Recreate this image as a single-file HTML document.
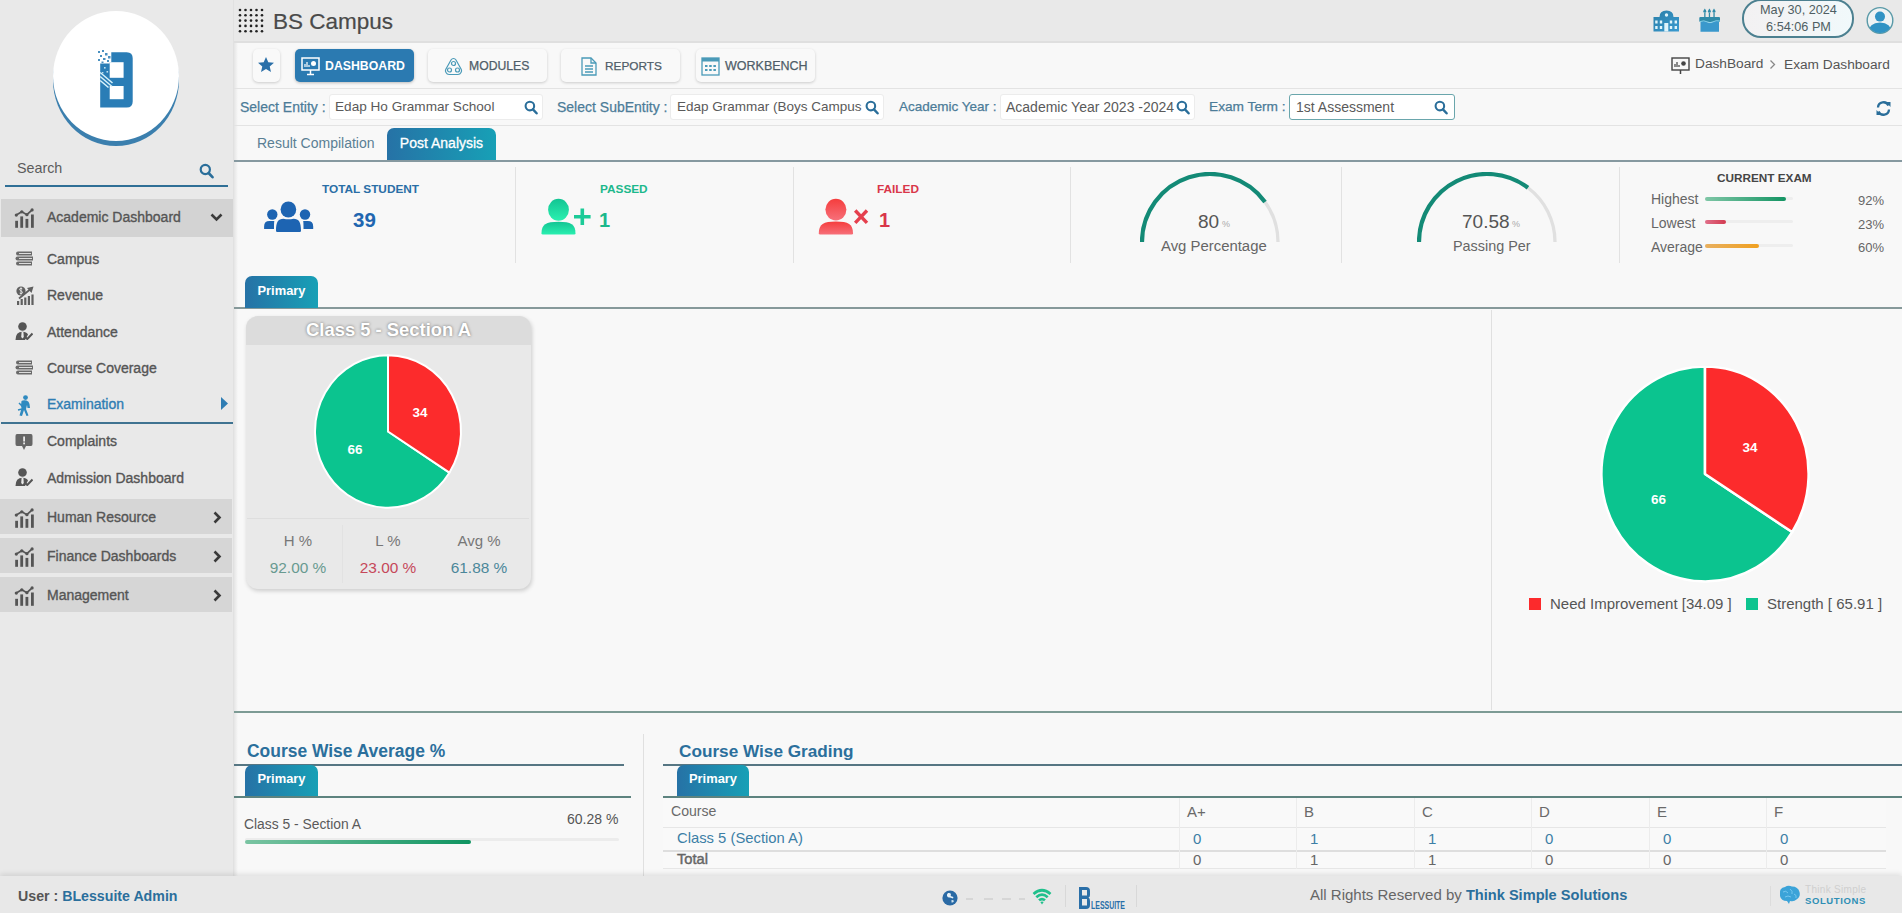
<!DOCTYPE html>
<html><head><meta charset="utf-8">
<style>
*{box-sizing:border-box;margin:0;padding:0}
html,body{width:1902px;height:913px;overflow:hidden}
body{font-family:"Liberation Sans",sans-serif;background:#f8f8f8;position:relative;color:#555}
.a{position:absolute}
.t{position:absolute;white-space:nowrap;line-height:1}
#side{left:0;top:0;width:234px;height:880px;background:#e9e9e9}
#hdr{left:234px;top:0;width:1668px;height:43px;background:#e9e9e9;border-bottom:2px solid #dfdfdf}
.navb{position:absolute;top:49px;height:33px;border-radius:5px;background:#f9f9f9;box-shadow:0 1px 3px rgba(0,0,0,.18)}
.navt{position:absolute;top:59px;font-size:12.2px;color:#4f5d68;white-space:nowrap;line-height:14px;-webkit-text-stroke:0.25px currentColor}
.hl{position:absolute;height:1px;background:#e2e2e2}
.lbl{position:absolute;top:100px;font-size:14px;color:#4c7c98;white-space:nowrap;line-height:14px;-webkit-text-stroke:0.25px currentColor}
.box{position:absolute;top:94px;height:26px;background:#fff;border:1px solid #ececec;border-radius:3px}
.boxt{position:absolute;top:99.5px;font-size:14px;color:#5a5a5a;white-space:nowrap;line-height:14px}
.vdiv{position:absolute;top:167px;width:1px;height:96px;background:#e2e2e2}
.ptab{position:absolute;height:32px;border-radius:7px 7px 0 0;background:linear-gradient(90deg,#2672a6,#17a0b6)}
.ptab span{position:absolute;left:0;right:0;top:7.5px;text-align:center;color:#fff;font-size:12.9px;font-weight:bold;line-height:14px}
.sitem{position:absolute;left:47px;font-size:14px;color:#555;white-space:nowrap;line-height:14px;-webkit-text-stroke:0.35px currentColor}
.srow{position:absolute;left:0;width:232px;height:35px;background:#d6d6d6}
</style></head><body>

<!-- SIDEBAR -->
<div id="side" class="a"></div>
<!-- logo circle -->
<div class="a" style="left:53px;top:14px;width:126px;height:132px;border-radius:50%;background:#3b7fae;"></div>
<div class="a" style="left:53px;top:11px;width:126px;height:130px;border-radius:50%;background:#fff;"></div>
<svg class="a" style="left:95px;top:46px" width="40" height="64" viewBox="0 0 40 64">
  <path d="M5.2 17.4 H14.7 V16.2 H16.3 V6.3 H31.7 Q37.7 6.3 37.7 12.3 V55.4 Q37.7 61.4 31.7 61.4 H5.2 Z" fill="#2a7db6"/>
  <rect x="14.7" y="16.2" width="13.9" height="15.6" fill="#fff"/>
  <rect x="14.7" y="40" width="13.9" height="13.2" fill="#fff"/>
  <g fill="#2a7db6" opacity=".85"><rect x="3" y="5" width="2" height="2"/><rect x="7" y="4" width="2" height="2"/><rect x="10" y="7" width="2.5" height="2.5"/><rect x="5" y="9" width="2" height="2"/><rect x="13" y="10" width="2.5" height="2.5"/><rect x="8" y="12" width="2.5" height="2"/><rect x="3" y="13" width="2" height="2"/><rect x="12" y="14" width="2" height="2"/><rect x="6.5" y="15.5" width="2" height="1.5"/></g>
  <g fill="#bfe0f0"><rect x="9" y="21" width="1.6" height="1.6"/><rect x="11.5" y="25" width="1.6" height="1.6"/><rect x="7" y="26" width="1.4" height="1.4"/></g>
  <g stroke="#d8f2fb" stroke-width="1.5"><line x1="5.2" y1="26.5" x2="17.5" y2="37"/><line x1="5.2" y1="30.5" x2="17" y2="40.5"/><line x1="5.2" y1="34.5" x2="13.5" y2="41.5"/></g>
</svg>
<!-- search -->
<div class="t" style="left:17px;top:161px;font-size:14.3px;color:#5c5c5c">Search</div>
<svg class="a" style="left:199px;top:163px" width="15" height="16" viewBox="0 0 15 16"><circle cx="6.3" cy="6.5" r="4.6" fill="none" stroke="#2a6e9a" stroke-width="2.2"/><line x1="9.6" y1="10" x2="13.5" y2="14.2" stroke="#2a6e9a" stroke-width="2.6" stroke-linecap="round"/></svg>
<div class="a" style="left:5px;top:185px;width:223px;height:2px;background:#2f6f96"></div>

<!-- Academic Dashboard -->
<div class="srow" style="top:199px;height:38px;left:1px;background:#d3d3d3"></div>
<svg class="a" style="left:14px;top:208px" width="21" height="21" viewBox="0 0 21 21"><g fill="#555"><rect x="1.2" y="12.8" width="2.8" height="7"/><rect x="6.3" y="8.4" width="2.8" height="11.4"/><rect x="11.5" y="10.9" width="2.8" height="8.9"/><rect x="17" y="6.5" width="2.8" height="13.3"/><circle cx="2.3" cy="7.1" r="1.6"/><circle cx="7.8" cy="3.8" r="1.6"/><circle cx="12.9" cy="6.7" r="1.6"/><circle cx="18.1" cy="1.9" r="1.6"/></g><polyline points="2.3,7.1 7.8,3.8 12.9,6.7 18.1,1.9" fill="none" stroke="#555" stroke-width="1.7"/></svg>
<div class="sitem" style="top:210px;color:#555">Academic Dashboard</div>
<svg class="a" style="left:210px;top:213px" width="13" height="9" viewBox="0 0 13 9"><polyline points="1.5,1.5 6.5,6.5 11.5,1.5" fill="none" stroke="#3a3a3a" stroke-width="2.6"/></svg>

<!-- sub items -->
<svg class="a" style="left:15px;top:251px" width="19" height="15" viewBox="0 0 19 15"><g fill="#6a6a6a"><path d="M3 0.5 H17 V4.5 H3 Q1 4.5 1 2.5 Q1 0.5 3 0.5Z"/><path d="M2.5 5.5 H18 V9.5 H2.5 Q0.5 9.5 0.5 7.5 Q0.5 5.5 2.5 5.5Z"/><path d="M3 10.5 H17 V14.5 H3 Q1 14.5 1 12.5 Q1 10.5 3 10.5Z"/></g><g stroke="#e9e9e9" stroke-width="0.9"><line x1="4" y1="2.5" x2="16" y2="2.5"/><line x1="4" y1="7.5" x2="17" y2="7.5"/><line x1="4" y1="12.5" x2="16" y2="12.5"/></g></svg>
<div class="sitem" style="top:252px">Campus</div>
<svg class="a" style="left:16px;top:286px" width="18" height="19" viewBox="0 0 18 19"><circle cx="5" cy="5" r="4.6" fill="#5f5f5f"/><path d="M6.3 2.8 Q5 2 3.8 2.8 Q3.2 3.8 4.4 4.6 L5.8 5.3 Q6.9 6 6.2 7.2 Q5 8 3.7 7.2 M5 1.3 V8.7" fill="none" stroke="#e9e9e9" stroke-width="0.9"/><g fill="#5f5f5f"><rect x="1" y="15" width="2.2" height="4"/><rect x="4.6" y="13" width="2.2" height="6"/><rect x="8.2" y="11.5" width="2.2" height="7.5"/><rect x="11.8" y="10" width="2.2" height="9"/><rect x="15.4" y="8.5" width="2.2" height="10.5"/></g><path d="M3 12.5 L14 3.5" stroke="#5f5f5f" stroke-width="1.8"/><polygon points="11,2 17.5,0.5 15.5,7" fill="#5f5f5f"/></svg>
<div class="sitem" style="top:288px">Revenue</div>
<svg class="a" style="left:15px;top:322px" width="18" height="18" viewBox="0 0 18 18"><circle cx="7.5" cy="4.5" r="4.3" fill="#555"/><path d="M0.5 18 Q0.5 9.8 7.5 9.8 Q11.5 9.8 13 12.5 L10 18 Z" fill="#555"/><path d="M6.6 10 L8.4 10 L8.8 15 L7.5 16.5 L6.2 15 Z" fill="#e9e9e9"/><polyline points="9.5,14.5 12.3,17 17.5,11.5" fill="none" stroke="#555" stroke-width="2"/></svg>
<div class="sitem" style="top:325px">Attendance</div>
<svg class="a" style="left:15px;top:360px" width="19" height="15" viewBox="0 0 19 15"><g fill="#6a6a6a"><path d="M3 0.5 H17 V4.5 H3 Q1 4.5 1 2.5 Q1 0.5 3 0.5Z"/><path d="M2.5 5.5 H18 V9.5 H2.5 Q0.5 9.5 0.5 7.5 Q0.5 5.5 2.5 5.5Z"/><path d="M3 10.5 H17 V14.5 H3 Q1 14.5 1 12.5 Q1 10.5 3 10.5Z"/></g><g stroke="#e9e9e9" stroke-width="0.9"><line x1="4" y1="2.5" x2="16" y2="2.5"/><line x1="4" y1="7.5" x2="17" y2="7.5"/><line x1="4" y1="12.5" x2="16" y2="12.5"/></g></svg>
<div class="sitem" style="top:361px">Course Coverage</div>
<svg class="a" style="left:17px;top:395px" width="15" height="21" viewBox="0 0 15 21"><circle cx="8.5" cy="2.6" r="2.4" fill="#2f8ac0"/><path d="M4.5 6 Q6 5 9.5 5.5 Q12 6 12.5 9 L13 13 L10.5 13 L10 10 L9 14 L11.5 20.5 L9.5 21 L7 15 L5 21 L2.5 20.5 L4.5 13.5 Q3.5 11 4.5 6Z" fill="#2f8ac0"/><path d="M2 8 L6 12 M1 15 L5 14" stroke="#2f8ac0" stroke-width="1.5"/></svg>
<div class="sitem" style="top:397px;color:#2f7db3">Examination</div>
<svg class="a" style="left:221px;top:397px" width="8" height="13" viewBox="0 0 8 13"><polygon points="0,0 7,6.5 0,13" fill="#2f7db3"/></svg>
<div class="a" style="left:1px;top:422px;width:232px;height:2px;background:#3f7391"></div>
<svg class="a" style="left:15px;top:433px" width="18" height="18" viewBox="0 0 18 18"><path d="M2 1 H16 Q17.5 1 17.5 3 V11 Q17.5 13 16 13 H11 L9 17 L7 13 H2 Q0.5 13 0.5 11 V3 Q0.5 1 2 1 Z" fill="#666"/><rect x="8.2" y="3.5" width="1.8" height="5" fill="#e9e9e9"/><rect x="8.2" y="9.5" width="1.8" height="1.8" fill="#e9e9e9"/></svg>
<div class="sitem" style="top:434px">Complaints</div>
<svg class="a" style="left:15px;top:468px" width="18" height="18" viewBox="0 0 18 18"><circle cx="7.5" cy="4.5" r="4.3" fill="#555"/><path d="M0.5 18 Q0.5 9.8 7.5 9.8 Q11.5 9.8 13 12.5 L10 18 Z" fill="#555"/><path d="M6.6 10 L8.4 10 L8.8 15 L7.5 16.5 L6.2 15 Z" fill="#e9e9e9"/><polyline points="9.5,14.5 12.3,17 17.5,11.5" fill="none" stroke="#555" stroke-width="2"/></svg>
<div class="sitem" style="top:471px">Admission Dashboard</div>

<div class="srow" style="top:499px"></div>
<svg class="a" style="left:14px;top:508px" width="21" height="21" viewBox="0 0 21 21"><g fill="#555"><rect x="1.2" y="12.8" width="2.8" height="7"/><rect x="6.3" y="8.4" width="2.8" height="11.4"/><rect x="11.5" y="10.9" width="2.8" height="8.9"/><rect x="17" y="6.5" width="2.8" height="13.3"/><circle cx="2.3" cy="7.1" r="1.6"/><circle cx="7.8" cy="3.8" r="1.6"/><circle cx="12.9" cy="6.7" r="1.6"/><circle cx="18.1" cy="1.9" r="1.6"/></g><polyline points="2.3,7.1 7.8,3.8 12.9,6.7 18.1,1.9" fill="none" stroke="#555" stroke-width="1.7"/></svg>
<div class="sitem" style="top:510px">Human Resource</div>
<svg class="a" style="left:213px;top:511px" width="9" height="13" viewBox="0 0 9 13"><polyline points="1.5,1.5 6.5,6.5 1.5,11.5" fill="none" stroke="#3a3a3a" stroke-width="2.6"/></svg>

<div class="srow" style="top:538px"></div>
<svg class="a" style="left:14px;top:547px" width="21" height="21" viewBox="0 0 21 21"><g fill="#555"><rect x="1.2" y="12.8" width="2.8" height="7"/><rect x="6.3" y="8.4" width="2.8" height="11.4"/><rect x="11.5" y="10.9" width="2.8" height="8.9"/><rect x="17" y="6.5" width="2.8" height="13.3"/><circle cx="2.3" cy="7.1" r="1.6"/><circle cx="7.8" cy="3.8" r="1.6"/><circle cx="12.9" cy="6.7" r="1.6"/><circle cx="18.1" cy="1.9" r="1.6"/></g><polyline points="2.3,7.1 7.8,3.8 12.9,6.7 18.1,1.9" fill="none" stroke="#555" stroke-width="1.7"/></svg>
<div class="sitem" style="top:549px">Finance Dashboards</div>
<svg class="a" style="left:213px;top:550px" width="9" height="13" viewBox="0 0 9 13"><polyline points="1.5,1.5 6.5,6.5 1.5,11.5" fill="none" stroke="#3a3a3a" stroke-width="2.6"/></svg>

<div class="srow" style="top:577px"></div>
<svg class="a" style="left:14px;top:586px" width="21" height="21" viewBox="0 0 21 21"><g fill="#555"><rect x="1.2" y="12.8" width="2.8" height="7"/><rect x="6.3" y="8.4" width="2.8" height="11.4"/><rect x="11.5" y="10.9" width="2.8" height="8.9"/><rect x="17" y="6.5" width="2.8" height="13.3"/><circle cx="2.3" cy="7.1" r="1.6"/><circle cx="7.8" cy="3.8" r="1.6"/><circle cx="12.9" cy="6.7" r="1.6"/><circle cx="18.1" cy="1.9" r="1.6"/></g><polyline points="2.3,7.1 7.8,3.8 12.9,6.7 18.1,1.9" fill="none" stroke="#555" stroke-width="1.7"/></svg>
<div class="sitem" style="top:588px">Management</div>
<svg class="a" style="left:213px;top:589px" width="9" height="13" viewBox="0 0 9 13"><polyline points="1.5,1.5 6.5,6.5 1.5,11.5" fill="none" stroke="#3a3a3a" stroke-width="2.6"/></svg>

<div class="a" style="left:233px;top:0;width:5px;height:876px;background:linear-gradient(90deg,#e0e0e0,rgba(248,248,248,0))"></div>
<!-- HEADER -->
<div id="hdr" class="a"></div>
<svg class="a" style="left:238px;top:8px" width="26" height="25" viewBox="0 0 26 25"><g fill="#222">
<circle cx="2" cy="2" r="1.3"/><circle cx="7.5" cy="2" r="1.3"/><circle cx="13" cy="2" r="1.3"/><circle cx="18.5" cy="2" r="1.3"/><circle cx="24" cy="2" r="1.3"/>
<circle cx="2" cy="7.3" r="1.3"/><circle cx="7.5" cy="7.3" r="1.3"/><circle cx="13" cy="7.3" r="1.3"/><circle cx="18.5" cy="7.3" r="1.3"/><circle cx="24" cy="7.3" r="1.3"/>
<circle cx="2" cy="12.6" r="1.3"/><circle cx="7.5" cy="12.6" r="1.3"/><circle cx="13" cy="12.6" r="1.3"/><circle cx="18.5" cy="12.6" r="1.3"/><circle cx="24" cy="12.6" r="1.3"/>
<circle cx="2" cy="17.9" r="1.3"/><circle cx="7.5" cy="17.9" r="1.3"/><circle cx="13" cy="17.9" r="1.3"/><circle cx="18.5" cy="17.9" r="1.3"/><circle cx="24" cy="17.9" r="1.3"/>
<circle cx="2" cy="23.2" r="1.3"/><circle cx="7.5" cy="23.2" r="1.3"/><circle cx="13" cy="23.2" r="1.3"/><circle cx="18.5" cy="23.2" r="1.3"/><circle cx="24" cy="23.2" r="1.3"/>
</g></svg>
<div class="t" style="left:273px;top:11px;font-size:22.5px;color:#4a4a4a;-webkit-text-stroke:0.2px currentColor">BS Campus</div>
<!-- header right icons -->
<svg class="a" style="left:1653px;top:10px" width="27" height="22" viewBox="0 0 27 22"><defs><linearGradient id="sg" x1="0" y1="0" x2="1" y2="1"><stop offset="0" stop-color="#2a7fa8"/><stop offset="1" stop-color="#3a9ad0"/></linearGradient></defs><path d="M0.5 7 H6.5 Q6.5 0.5 13.5 0.5 Q20.5 0.5 20.5 7 H26 V21.5 H0.5 Z" fill="url(#sg)"/><g fill="#dff4fb"><circle cx="13.5" cy="5" r="1.7"/><rect x="2.2" y="10.5" width="2.4" height="3"/><rect x="6.8" y="10.5" width="2.4" height="3"/><rect x="16.8" y="10.5" width="2.4" height="3"/><rect x="21.6" y="10.5" width="2.4" height="3"/><rect x="2.2" y="16" width="2.4" height="3"/><rect x="6.8" y="16" width="2.4" height="3"/><rect x="16.8" y="16" width="2.4" height="3"/><rect x="21.6" y="16" width="2.4" height="3"/><rect x="11.3" y="13" width="4" height="8.5"/></g></svg>
<svg class="a" style="left:1699px;top:8px" width="22" height="24" viewBox="0 0 22 24"><g fill="#2f8aa8"><path d="M5.8 0.5 Q7.3 2.5 7.3 3.5 Q7.3 4.8 5.8 4.8 Q4.3 4.8 4.3 3.5 Q4.3 2.5 5.8 0.5Z"/><path d="M10.4 0.5 Q11.9 2.5 11.9 3.5 Q11.9 4.8 10.4 4.8 Q8.9 4.8 8.9 3.5 Q8.9 2.5 10.4 0.5Z"/><path d="M15 0.5 Q16.5 2.5 16.5 3.5 Q16.5 4.8 15 4.8 Q13.5 4.8 13.5 3.5 Q13.5 2.5 15 0.5Z"/><rect x="5.2" y="5" width="1.3" height="4.5"/><rect x="9.8" y="5" width="1.3" height="4.5"/><rect x="14.4" y="5" width="1.3" height="4.5"/><rect x="0.3" y="9" width="20.7" height="5" rx="1"/></g><path d="M1.5 13.8 Q5 12.5 8 14 T14 14 T20 13.5 V23.7 H1.5 Z" fill="#3a98cc"/><path d="M1 13.6 Q5 12 8 13.8 T14 13.8 T21 13" fill="none" stroke="#8fd6ee" stroke-width="0.9"/></svg>
<div class="a" style="left:1742px;top:-1px;width:112px;height:38.5px;border:2px solid #4c8090;border-radius:19px;background:linear-gradient(90deg,#f3f1f2,#f1f9fb)"></div>
<div class="t" style="left:1743px;width:111px;top:1.5px;text-align:center;font-size:12.7px;color:#4f5f63;line-height:17.5px">May 30, 2024<br>6:54:06 PM</div>
<svg class="a" style="left:1866px;top:6px" width="28" height="29" viewBox="0 0 28 29"><defs><clipPath id="uc"><circle cx="14" cy="14.4" r="12.6"/></clipPath></defs><circle cx="14" cy="14.4" r="12.8" fill="#eef3f4" stroke="#5a9aa8" stroke-width="1.4"/><g clip-path="url(#uc)" fill="#3193c4"><circle cx="14" cy="10.6" r="5"/><path d="M2 29 Q2 16.5 14 16.5 Q26 16.5 26 29 Z"/></g></svg>

<!-- NAV ROW -->
<div class="a" style="left:234px;top:88px;width:1668px;height:1px;background:#e3e3e3"></div>
<div class="navb" style="left:253px;width:27px;"></div>
<svg class="a" style="left:257px;top:56px" width="18" height="17" viewBox="0 0 18 17"><polygon points="9,1 11.3,6.2 17,6.7 12.7,10.4 14,16 9,13 4,16 5.3,10.4 1,6.7 6.7,6.2" fill="#2a6fa8"/></svg>
<div class="navb" style="left:295px;width:119px;background:#2b7ab1;box-shadow:0 1px 3px rgba(0,0,0,.25)"></div>
<svg class="a" style="left:301px;top:57px" width="19" height="19" viewBox="0 0 19 19"><rect x="1" y="1" width="17" height="12" fill="none" stroke="#fff" stroke-width="1.5"/><line x1="9.5" y1="13" x2="9.5" y2="17" stroke="#fff" stroke-width="1.5"/><line x1="6" y1="17.5" x2="13" y2="17.5" stroke="#fff" stroke-width="1.5"/><circle cx="12.5" cy="6.5" r="2.5" fill="#fff"/><path d="M4 10 V7 M6 10 V5 M8 10 V8" stroke="#fff" stroke-width="1.2"/></svg>
<div class="navt" style="left:325px;color:#fff;font-weight:bold;font-size:12.3px;-webkit-text-stroke:0">DASHBOARD</div>
<div class="navb" style="left:428px;width:119px;"></div>
<svg class="a" style="left:444px;top:57px" width="19" height="19" viewBox="0 0 19 19"><g fill="none" stroke="#4a9ab8" stroke-width="1.2"><path d="M9.5 1.5 Q11 1.5 12 3 L17.3 12.5 Q18 14 17 15.5 Q16 17.5 14 17.5 H5 Q3 17.5 2 15.5 Q1 14 1.7 12.5 L7 3 Q8 1.5 9.5 1.5 Z"/><circle cx="9.5" cy="6.5" r="2"/><circle cx="5.5" cy="13" r="2"/><circle cx="13.5" cy="13" r="2"/></g></svg>
<div class="navt" style="left:469px">MODULES</div>
<div class="navb" style="left:561px;width:119px;"></div>
<svg class="a" style="left:581px;top:57px" width="16" height="19" viewBox="0 0 16 19"><g fill="none" stroke="#4a9ab8" stroke-width="1.3"><path d="M1 1 H10 L15 6 V18 H1 Z"/><path d="M10 1 V6 H15"/><path d="M4 9 H12 M4 12 H12 M4 15 H12"/></g></svg>
<div class="navt" style="left:605px;font-size:11.8px">REPORTS</div>
<div class="navb" style="left:696px;width:119px;"></div>
<svg class="a" style="left:701px;top:57px" width="19" height="19" viewBox="0 0 19 19"><g fill="none" stroke="#4a9ab8" stroke-width="1.3"><rect x="1" y="1" width="17" height="17"/></g><rect x="1" y="1" width="17" height="3.5" fill="#4a9ab8"/><g fill="#4a9ab8"><rect x="4" y="8" width="2.5" height="2"/><rect x="8.2" y="8" width="2.5" height="2"/><rect x="12.4" y="8" width="2.5" height="2"/><rect x="4" y="12" width="2.5" height="2"/><rect x="8.2" y="12" width="2.5" height="2"/><rect x="12.4" y="12" width="2.5" height="2"/></g></svg>
<div class="navt" style="left:725px;font-size:12.5px">WORKBENCH</div>
<!-- breadcrumb -->
<svg class="a" style="left:1671px;top:57px" width="19" height="18" viewBox="0 0 19 18"><rect x="1" y="1" width="17" height="12" fill="none" stroke="#444" stroke-width="1.4"/><line x1="9.5" y1="13" x2="9.5" y2="17" stroke="#444" stroke-width="1.5"/><circle cx="12.5" cy="6.5" r="2.3" fill="#444"/><path d="M4 10 V7 M6 10 V5 M8 10 V8" stroke="#444" stroke-width="1.2"/></svg>
<div class="t" style="left:1695px;top:57px;font-size:13.7px;color:#555">DashBoard</div>
<svg class="a" style="left:1769px;top:59px" width="7" height="11" viewBox="0 0 7 11"><polyline points="1.5,1.5 5.5,5.5 1.5,9.5" fill="none" stroke="#888" stroke-width="1.3"/></svg>
<div class="t" style="left:1784px;top:58px;font-size:13.7px;color:#555">Exam Dashboard</div>

<!-- FILTER ROW -->
<div class="a" style="left:234px;top:125px;width:1668px;height:1px;background:#e3e3e3"></div>
<div class="lbl" style="left:240px">Select Entity :</div>
<div class="box" style="left:329px;width:214px"></div>
<div class="boxt" style="left:335px;font-size:13.6px">Edap Ho Grammar School</div>
<svg class="a search" style="left:524px;top:100px" width="14" height="15" viewBox="0 0 15 16"><circle cx="6.3" cy="6.5" r="4.6" fill="none" stroke="#2a6e9a" stroke-width="2.2"/><line x1="9.6" y1="10" x2="13.5" y2="14.2" stroke="#2a6e9a" stroke-width="2.6" stroke-linecap="round"/></svg>
<div class="lbl" style="left:557px">Select SubEntity :</div>
<div class="box" style="left:670px;width:214px"></div>
<div class="boxt" style="left:677px;font-size:13.5px">Edap Grammar (Boys Campus</div>
<svg class="a" style="left:865px;top:100px" width="14" height="15" viewBox="0 0 15 16"><circle cx="6.3" cy="6.5" r="4.6" fill="none" stroke="#2a6e9a" stroke-width="2.2"/><line x1="9.6" y1="10" x2="13.5" y2="14.2" stroke="#2a6e9a" stroke-width="2.6" stroke-linecap="round"/></svg>
<div class="lbl" style="left:899px;font-size:13.5px">Academic Year :</div>
<div class="box" style="left:1000px;width:195px"></div>
<div class="boxt" style="left:1006px">Academic Year 2023 -2024</div>
<svg class="a" style="left:1176px;top:100px" width="14" height="15" viewBox="0 0 15 16"><circle cx="6.3" cy="6.5" r="4.6" fill="none" stroke="#2a6e9a" stroke-width="2.2"/><line x1="9.6" y1="10" x2="13.5" y2="14.2" stroke="#2a6e9a" stroke-width="2.6" stroke-linecap="round"/></svg>
<div class="lbl" style="left:1209px;font-size:13.7px">Exam Term :</div>
<div class="box" style="left:1289px;width:166px;border:1px solid #6aa6ac"></div>
<div class="boxt" style="left:1296px">1st Assessment</div>
<svg class="a" style="left:1434px;top:100px" width="14" height="15" viewBox="0 0 15 16"><circle cx="6.3" cy="6.5" r="4.6" fill="none" stroke="#2a6e9a" stroke-width="2.2"/><line x1="9.6" y1="10" x2="13.5" y2="14.2" stroke="#2a6e9a" stroke-width="2.6" stroke-linecap="round"/></svg>
<svg class="a" style="left:1876px;top:101px" width="15" height="15" viewBox="0 0 15 15"><g fill="none" stroke="#2a6e9a" stroke-width="2.3"><path d="M2 6.5 A5.5 5.5 0 0 1 12.5 4.5"/><path d="M13 8.5 A5.5 5.5 0 0 1 2.5 10.5"/></g><polygon points="10,1 14.5,1 14.5,6 " fill="#2a6e9a"/><polygon points="0.5,9 5,14 0.5,14" fill="#2a6e9a"/></svg>

<!-- TABS -->
<div class="a" style="left:234px;top:160px;width:1668px;height:2px;background:#8699a0"></div>
<div class="t" style="left:257px;top:136px;font-size:14px;color:#5a7f94">Result Compilation</div>
<div class="ptab" style="left:387px;top:128px;width:109px;height:32px;"><span style="top:8px;font-weight:normal;font-size:14px;-webkit-text-stroke:0.3px #fff">Post Analysis</span></div>


<!-- STATS -->
<div class="vdiv" style="left:515px"></div>
<div class="vdiv" style="left:793px"></div>
<div class="vdiv" style="left:1070px"></div>
<div class="vdiv" style="left:1341px"></div>
<div class="vdiv" style="left:1619px"></div>
<svg class="a" style="left:263px;top:200px" width="52" height="34" viewBox="0 0 52 34"><g fill="#1d64b2"><ellipse cx="25.4" cy="9.5" rx="7.8" ry="8.1"/><path d="M13 30.8 C13 22 15 18.7 20.5 18.7 Q25.4 19.8 30.5 18.7 C36 18.7 38 22 38 30.8 Q38 32 36.8 32 H14.2 Q13 32 13 30.8Z"/><circle cx="9.3" cy="14.5" r="5.2"/><path d="M1.1 29 V26.5 Q1.1 21.1 6.5 21.1 H11.3 Q11 23 11 26 V29 Z"/><circle cx="42" cy="14.5" r="5.2"/><path d="M50.2 29 V26.5 Q50.2 21.1 44.8 21.1 H40.2 Q40.5 23 40.5 26 V29 Z"/></g></svg>
<div class="t" style="left:322px;top:184px;font-size:11.8px;font-weight:bold;color:#2a6ea6">TOTAL STUDENT</div>
<div class="t" style="left:353px;top:210px;font-size:20.5px;font-weight:bold;color:#2166b0">39</div>

<svg class="a" style="left:540px;top:198px" width="52" height="38" viewBox="0 0 52 38"><defs><linearGradient id="gp" x1="0" y1="0" x2="0" y2="1"><stop offset="0" stop-color="#12c493"/><stop offset="1" stop-color="#2af0b0"/></linearGradient></defs><g fill="url(#gp)"><ellipse cx="18.5" cy="11.7" rx="10.4" ry="11"/><path d="M1.5 35.3 C1.5 26.5 6 23.8 18.5 23.8 C31 23.8 35.5 26.5 35.5 35.3 Q35.5 36.6 34.2 36.6 H2.8 Q1.5 36.6 1.5 35.3 Z"/></g><path d="M42.3 10.5 V27.1 M34 18.8 H50.6" stroke="#1ccb98" stroke-width="3.6"/></svg>
<div class="t" style="left:600px;top:184px;font-size:11.8px;font-weight:bold;color:#1cb88c">PASSED</div>
<div class="t" style="left:599px;top:210px;font-size:20px;font-weight:bold;color:#1cb88c">1</div>

<svg class="a" style="left:818px;top:198px" width="52" height="38" viewBox="0 0 52 38"><defs><linearGradient id="gf" x1="0" y1="0" x2="0" y2="1"><stop offset="0" stop-color="#f53d3d"/><stop offset="1" stop-color="#f7707a"/></linearGradient></defs><g fill="url(#gf)"><ellipse cx="17.9" cy="11.6" rx="10.5" ry="10.8"/><path d="M0.8 35.3 C0.8 26.3 5.5 23.5 17.9 23.5 C30.3 23.5 35 26.3 35 35.3 Q35 36.6 33.7 36.6 H2.1 Q0.8 36.6 0.8 35.3 Z"/></g><path d="M37.2 12.5 L49 24.9 M49 12.5 L37.2 24.9" stroke="#e5404e" stroke-width="3.4"/></svg>
<div class="t" style="left:877px;top:184px;font-size:11.8px;font-weight:bold;color:#d9364a">FAILED</div>
<div class="t" style="left:879px;top:210px;font-size:20px;font-weight:bold;color:#d9364a">1</div>

<svg class="a" style="left:1140px;top:172px" width="140" height="76" viewBox="0 0 140 76"><path d="M125.01 30.03 A68 68 0 0 1 138 70" fill="none" stroke="#e0e0e0" stroke-width="3.3"/><path d="M2 70 A68 68 0 0 1 125.01 30.03" fill="none" stroke="#138a76" stroke-width="4.2"/></svg>
<div class="t" style="left:1198px;top:212px;font-size:19px;color:#555">80</div>
<div class="t" style="left:1222px;top:220px;font-size:9px;color:#aaa">%</div>
<div class="t" style="left:1161px;top:239px;font-size:14.9px;color:#666">Avg Percentage</div>

<svg class="a" style="left:1417px;top:172px" width="140" height="76" viewBox="0 0 140 76"><path d="M110.97 15.72 A68 68 0 0 1 138 70" fill="none" stroke="#e0e0e0" stroke-width="3.3"/><path d="M2 70 A68 68 0 0 1 110.97 15.72" fill="none" stroke="#138a76" stroke-width="4.2"/></svg>
<div class="t" style="left:1462px;top:212px;font-size:19px;color:#555">70.58</div>
<div class="t" style="left:1512px;top:220px;font-size:9px;color:#aaa">%</div>
<div class="t" style="left:1453px;top:239px;font-size:14.4px;color:#666">Passing Per</div>

<div class="t" style="left:1717px;top:172px;font-size:11.75px;font-weight:bold;color:#454545">CURRENT EXAM</div>
<div class="t" style="left:1651px;top:192px;font-size:14px;color:#666">Highest</div>
<div class="t" style="left:1651px;top:216px;font-size:14px;color:#666">Lowest</div>
<div class="t" style="left:1651px;top:240px;font-size:14px;color:#666">Average</div>
<div class="a" style="left:1705px;top:197px;width:88px;height:3px;border-radius:2px;background:#eee"></div>
<div class="a" style="left:1705px;top:197px;width:81px;height:4px;border-radius:2px;background:linear-gradient(90deg,#7fc6a6,#139463)"></div>
<div class="a" style="left:1705px;top:220px;width:88px;height:3px;border-radius:2px;background:#eee"></div>
<div class="a" style="left:1705px;top:220px;width:21px;height:4px;border-radius:2px;background:linear-gradient(90deg,#e0708a,#d33a50)"></div>
<div class="a" style="left:1705px;top:244px;width:88px;height:3px;border-radius:2px;background:#eee"></div>
<div class="a" style="left:1705px;top:244px;width:54px;height:4px;border-radius:2px;background:linear-gradient(90deg,#e8b060,#f0a020)"></div>
<div class="t" style="left:1858px;top:194px;font-size:13px;color:#666">92%</div>
<div class="t" style="left:1858px;top:218px;font-size:13px;color:#666">23%</div>
<div class="t" style="left:1858px;top:241px;font-size:13px;color:#666">60%</div>

<!-- PRIMARY TAB + CHART AREA -->
<div class="a" style="left:234px;top:307px;width:1668px;height:2px;background:#86999a"></div>
<div class="ptab" style="left:245px;top:276px;width:73px;"><span>Primary</span></div>

<div class="a" style="left:246px;top:316px;width:285px;height:273px;border-radius:12px;background:#e9e9e9;box-shadow:1px 2px 4px rgba(0,0,0,.18)"></div>
<div class="a" style="left:246px;top:316px;width:285px;height:29px;border-radius:12px 12px 0 0;background:#dcdcdc"></div>
<div class="t" style="left:246px;width:285px;text-align:center;top:321px;font-size:18.4px;font-weight:bold;color:#fff;text-shadow:0 0 3px rgba(0,0,0,.5)">Class 5 - Section A</div>
<svg class="a" style="left:313px;top:354px" width="150" height="155" viewBox="0 0 150 155"><g stroke="#fff" stroke-width="2" stroke-linejoin="round"><path d="M75 77.5 L136.41 118.69 A73 76.2 0 1 1 75 1.30 Z" fill="#0bc48f"/><path d="M75 77.5 L75 1.30 A73 76.2 0 0 1 136.41 118.69 Z" fill="#fc2b2c"/></g>
<text x="107" y="62.5" font-size="13.5" font-weight="bold" fill="#fff" text-anchor="middle" font-family="Liberation Sans">34</text>
<text x="42" y="99.5" font-size="13.5" font-weight="bold" fill="#fff" text-anchor="middle" font-family="Liberation Sans">66</text></svg>
<div class="a" style="left:247px;top:518px;width:282px;height:1px;background:#dedede"></div>
<div class="a" style="left:342px;top:525px;width:1px;height:58px;background:#e2e2e2"></div>

<div class="t" style="left:254px;width:88px;text-align:center;top:533px;font-size:15px;color:#777">H %</div>
<div class="t" style="left:343px;width:90px;text-align:center;top:533px;font-size:15px;color:#777">L %</div>
<div class="t" style="left:434px;width:90px;text-align:center;top:533px;font-size:15px;color:#777">Avg %</div>
<div class="t" style="left:254px;width:88px;text-align:center;top:560px;font-size:15.4px;color:#689a90">92.00 %</div>
<div class="t" style="left:343px;width:90px;text-align:center;top:560px;font-size:15.4px;color:#c6485a">23.00 %</div>
<div class="t" style="left:434px;width:90px;text-align:center;top:560px;font-size:15.4px;color:#4b879a">61.88 %</div>

<div class="a" style="left:1491px;top:310px;width:1px;height:400px;background:#e0e0e0"></div>
<svg class="a" style="left:1600px;top:366px" width="212" height="218" viewBox="0 0 212 218"><g stroke="#fff" stroke-width="2.5" stroke-linejoin="round"><path d="M105 108 L192.16 166.06 A103.6 107.4 0 1 1 105 0.60 Z" fill="#0bc48f"/><path d="M105 108 L105 0.60 A103.6 107.4 0 0 1 192.16 166.06 Z" fill="#fc2b2c"/></g>
<text x="150" y="86" font-size="13.5" font-weight="bold" fill="#fff" text-anchor="middle" font-family="Liberation Sans">34</text>
<text x="58.5" y="138" font-size="13.5" font-weight="bold" fill="#fff" text-anchor="middle" font-family="Liberation Sans">66</text></svg>
<div class="a" style="left:1529px;top:598px;width:12px;height:12px;background:#fc2a2c"></div>
<div class="t" style="left:1550px;top:596px;font-size:15px;color:#555">Need Improvement [34.09 ]</div>
<div class="a" style="left:1746px;top:598px;width:12px;height:12px;background:#0dc48f"></div>
<div class="t" style="left:1767px;top:596px;font-size:15px;color:#555">Strength [ 65.91 ]</div>
<div class="a" style="left:234px;top:711px;width:1668px;height:2px;background:#7d9b95"></div>


<!-- BOTTOM: course wise average -->
<div class="a" style="left:643px;top:734px;width:1px;height:142px;background:#e0e0e0"></div>
<div class="t" style="left:247px;top:743px;font-size:17.45px;font-weight:bold;color:#2b6f9c">Course Wise Average %</div>
<div class="a" style="left:234px;top:764px;width:390px;height:1.6px;background:#567683"></div>
<div class="ptab" style="left:245px;top:765px;width:73px;height:31px"><span style="top:7px">Primary</span></div>
<div class="a" style="left:234px;top:796px;width:397px;height:1.6px;background:#5d837f"></div>
<div class="t" style="left:244px;top:818px;font-size:13.85px;color:#5a5a5a">Class 5 - Section A</div>
<div class="t" style="left:567px;top:812px;font-size:14px;color:#555">60.28 %</div>
<div class="a" style="left:245px;top:838px;width:374px;height:3px;border-radius:2px;background:#ececec"></div>
<div class="a" style="left:245px;top:840px;width:226px;height:4px;border-radius:2px;background:linear-gradient(90deg,#7ac4a2,#0f9461)"></div>

<!-- course wise grading -->
<div class="t" style="left:679px;top:743px;font-size:17.2px;font-weight:bold;color:#2b6f9c">Course Wise Grading</div>
<div class="a" style="left:663px;top:764px;width:1239px;height:1.6px;background:#567683"></div>
<div class="ptab" style="left:677px;top:765px;width:72px;height:31px"><span style="top:7px">Primary</span></div>
<div class="a" style="left:663px;top:796px;width:1239px;height:1.6px;background:#5d837f"></div>
<div class="a" style="left:663px;top:798px;width:1223px;height:71px;background:#f9f9f9"></div>
<div class="a" style="left:663px;top:827px;width:1223px;height:1px;background:#e6e6e6"></div>
<div class="a" style="left:663px;top:850px;width:1223px;height:2px;background:#dedede"></div>
<div class="a" style="left:663px;top:868px;width:1223px;height:1px;background:#e6e6e6"></div>
<div class="t" style="left:671px;top:804px;font-size:14.1px;color:#6a6a6a">Course</div>
<div class="t" style="left:677px;top:831px;font-size:14.8px;color:#3c7fa6">Class 5 (Section A)</div>
<div class="t" style="left:677px;top:852px;font-size:14.7px;color:#666;-webkit-text-stroke:0.45px currentColor">Total</div>
<div class="a" style="left:1179px;top:798px;width:1px;height:71px;background:#ececec"></div>
<div class="t" style="left:1187px;top:804px;font-size:15px;color:#6a6a6a">A+</div>
<div class="t" style="left:1193px;top:831px;font-size:15px;color:#3c7fa6">0</div>
<div class="t" style="left:1193px;top:852px;font-size:15px;color:#666">0</div>
<div class="a" style="left:1296px;top:798px;width:1px;height:71px;background:#ececec"></div>
<div class="t" style="left:1304px;top:804px;font-size:15px;color:#6a6a6a">B</div>
<div class="t" style="left:1310px;top:831px;font-size:15px;color:#3c7fa6">1</div>
<div class="t" style="left:1310px;top:852px;font-size:15px;color:#666">1</div>
<div class="a" style="left:1414px;top:798px;width:1px;height:71px;background:#ececec"></div>
<div class="t" style="left:1422px;top:804px;font-size:15px;color:#6a6a6a">C</div>
<div class="t" style="left:1428px;top:831px;font-size:15px;color:#3c7fa6">1</div>
<div class="t" style="left:1428px;top:852px;font-size:15px;color:#666">1</div>
<div class="a" style="left:1531px;top:798px;width:1px;height:71px;background:#ececec"></div>
<div class="t" style="left:1539px;top:804px;font-size:15px;color:#6a6a6a">D</div>
<div class="t" style="left:1545px;top:831px;font-size:15px;color:#3c7fa6">0</div>
<div class="t" style="left:1545px;top:852px;font-size:15px;color:#666">0</div>
<div class="a" style="left:1649px;top:798px;width:1px;height:71px;background:#ececec"></div>
<div class="t" style="left:1657px;top:804px;font-size:15px;color:#6a6a6a">E</div>
<div class="t" style="left:1663px;top:831px;font-size:15px;color:#3c7fa6">0</div>
<div class="t" style="left:1663px;top:852px;font-size:15px;color:#666">0</div>
<div class="a" style="left:1766px;top:798px;width:1px;height:71px;background:#ececec"></div>
<div class="t" style="left:1774px;top:804px;font-size:15px;color:#6a6a6a">F</div>
<div class="t" style="left:1780px;top:831px;font-size:15px;color:#3c7fa6">0</div>
<div class="t" style="left:1780px;top:852px;font-size:15px;color:#666">0</div>

<!-- FOOTER -->
<div class="a" style="left:0;top:876px;width:1902px;height:37px;background:#e8e8e8;box-shadow:0 -2px 5px rgba(0,0,0,.10)"></div>
<div class="t" style="left:18px;top:889px;font-size:14.2px;color:#555;font-weight:bold">User : <span style="color:#2b6f9c">BLessuite Admin</span></div>
<svg class="a" style="left:942px;top:890px" width="16" height="16" viewBox="0 0 16 16"><circle cx="8" cy="8" r="7.6" fill="#2a6aa5"/><path d="M6 3 Q8 2.5 9 4 Q8 6 10 6.5 Q12 6.5 11 8.5 L8 7.5 Q6 8 5 6 Q4.5 4.5 6 3Z" fill="#e8f2f8"/><path d="M9.5 10 Q11 9.5 12 11 Q11 13 9.5 12.5Z" fill="#cfe3ef"/></svg>
<div class="a" style="left:966px;top:898px;width:7px;height:2px;background:#d6d6d6"></div>
<div class="a" style="left:984px;top:898px;width:9px;height:2px;background:#d6d6d6"></div>
<div class="a" style="left:1002px;top:898px;width:9px;height:2px;background:#d6d6d6"></div>
<div class="a" style="left:1019px;top:898px;width:6px;height:2px;background:#d6d6d6"></div>
<svg class="a" style="left:1032px;top:888px" width="20" height="17" viewBox="0 0 20 17"><g fill="none" stroke="#20c08c" stroke-width="2.7" stroke-linecap="butt"><path d="M1.5 6 Q10 -1.5 18.5 6"/><path d="M4.3 9.2 Q10 4 15.7 9.2"/><path d="M7 12.3 Q10 9.8 13 12.3"/></g><path d="M8.3 14 L10 16.5 L11.7 14 Q10 12.8 8.3 14Z" fill="#20c08c"/></svg>
<div class="a" style="left:1065px;top:885px;width:1px;height:22px;background:#d8d8d8"></div>
<svg class="a" style="left:1078px;top:886px" width="48" height="24" viewBox="0 0 48 24"><path d="M1 1 H8 Q12 1 12 5 V9 Q12 11 10.5 11.5 Q12 12 12 15 V19 Q12 23 8 23 H1 Z" fill="#2a6fa8"/><rect x="4" y="4" width="5" height="5.5" fill="#e9e9e9"/><rect x="4" y="13" width="5" height="6.5" fill="#e9e9e9"/><text x="13" y="23" font-size="10" font-weight="bold" fill="#2a6fa8" font-family="Liberation Sans" textLength="34" lengthAdjust="spacingAndGlyphs">LESSUITE</text></svg>
<div class="a" style="left:1136px;top:885px;width:1px;height:22px;background:#d8d8d8"></div>
<div class="t" style="left:1310px;top:887px;font-size:15px;color:#666">All Rights Reserved by <span style="color:#2b6f9c;font-weight:bold;font-size:14.6px">Think Simple Solutions</span></div>
<div class="a" style="left:1770px;top:886px;width:1px;height:20px;background:#dcdcdc"></div>
<svg class="a" style="left:1778px;top:885px" width="23" height="20" viewBox="0 0 23 20"><path d="M2 9 Q1 3 7 2 Q10 0 14 1.5 Q20 1.5 21.5 7 Q23 12 18.5 14.5 Q16 17 12 16 L11 19 L9 16 Q3 16 2 11 Z" fill="#3ba3d8"/><path d="M5 7 Q8 5 10 8 M12 4 Q15 6 14 9 M7 12 Q10 10 13 12 M16 9 Q19 10 18 13" fill="none" stroke="#7ccaf0" stroke-width="0.9"/></svg>
<div class="t" style="left:1805px;top:885px;font-size:10px;color:#cfcfcf;letter-spacing:0.3px">Think Simple</div>
<div class="t" style="left:1805px;top:895.5px;font-size:9.5px;color:#2e8fb5;font-weight:bold;letter-spacing:0.6px">SOLUTIONS</div>

</body></html>
